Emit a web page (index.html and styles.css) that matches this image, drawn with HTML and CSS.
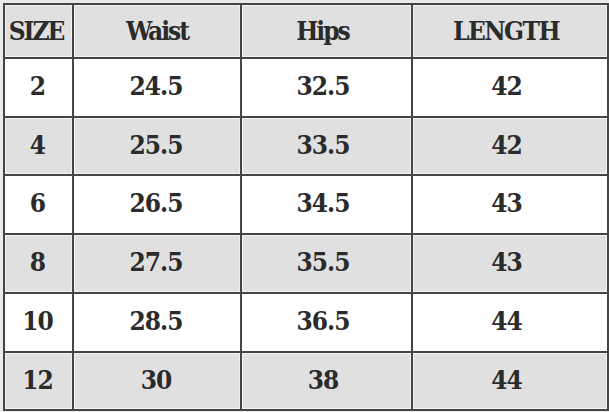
FILE: index.html
```html
<!DOCTYPE html>
<html>
<head>
<meta charset="utf-8">
<link rel="stylesheet" href="styles.css">
</head>
<body>
<table class="size-table">
  <colgroup>
    <col class="c1"><col class="c2"><col class="c3"><col class="c4">
  </colgroup>
  <tr class="head h54"><td>SIZE</td><td>Waist</td><td>Hips</td><td class="wide">LENGTH</td></tr>
  <tr class="light h59"><td>2</td><td>24.5</td><td>32.5</td><td>42</td></tr>
  <tr class="grey h58"><td>4</td><td>25.5</td><td>33.5</td><td>42</td></tr>
  <tr class="light h59"><td>6</td><td>26.5</td><td>34.5</td><td>43</td></tr>
  <tr class="grey h59"><td>8</td><td>27.5</td><td>35.5</td><td>43</td></tr>
  <tr class="light h59"><td>10</td><td>28.5</td><td>36.5</td><td>44</td></tr>
  <tr class="grey h58"><td>12</td><td>30</td><td>38</td><td>44</td></tr>
</table>
</body>
</html>
```
FILE: styles.css
```css
html, body {
  margin: 0;
  padding: 0;
  background: #ebebeb;
}
body {
  padding: 3px 0 0 3px;
}
.size-table {
  border-collapse: collapse;
  table-layout: fixed;
  width: 604px;
  font-family: "DejaVu Serif Condensed", "DejaVu Serif", serif;
  font-stretch: condensed;
  font-weight: bold;
  font-size: 26px;
  color: #2b2b2b;
}
.c1 { width: 69px; }
.c2 { width: 168px; }
.c3 { width: 171px; }
.c4 { width: 196px; }
.size-table td {
  border: 2px solid #454545;
  text-align: center;
  vertical-align: middle;
  padding: 0 2px 3px 0;
  line-height: 1;
  letter-spacing: -1px;
}
.size-table td:nth-child(3),
.size-table td:nth-child(4) {
  padding-right: 7px;
}
.head td {
  letter-spacing: -2px;
  padding: 0 5px 1px 0;
}
.head td:nth-child(2) {
  padding-right: 0;
}
.head td:nth-child(3) {
  padding-right: 8px;
}
.head td.wide {
  letter-spacing: -1.5px;
  padding-right: 8px;
}
.head td, .grey td {
  background: #e0e0e0;
  box-shadow: inset 0 0 0 1px #f3f3f3;
}
.light td {
  background: #ffffff;
}
.h54 { height: 54px; }
.h58 { height: 58px; }
.h59 { height: 59px; }
```
